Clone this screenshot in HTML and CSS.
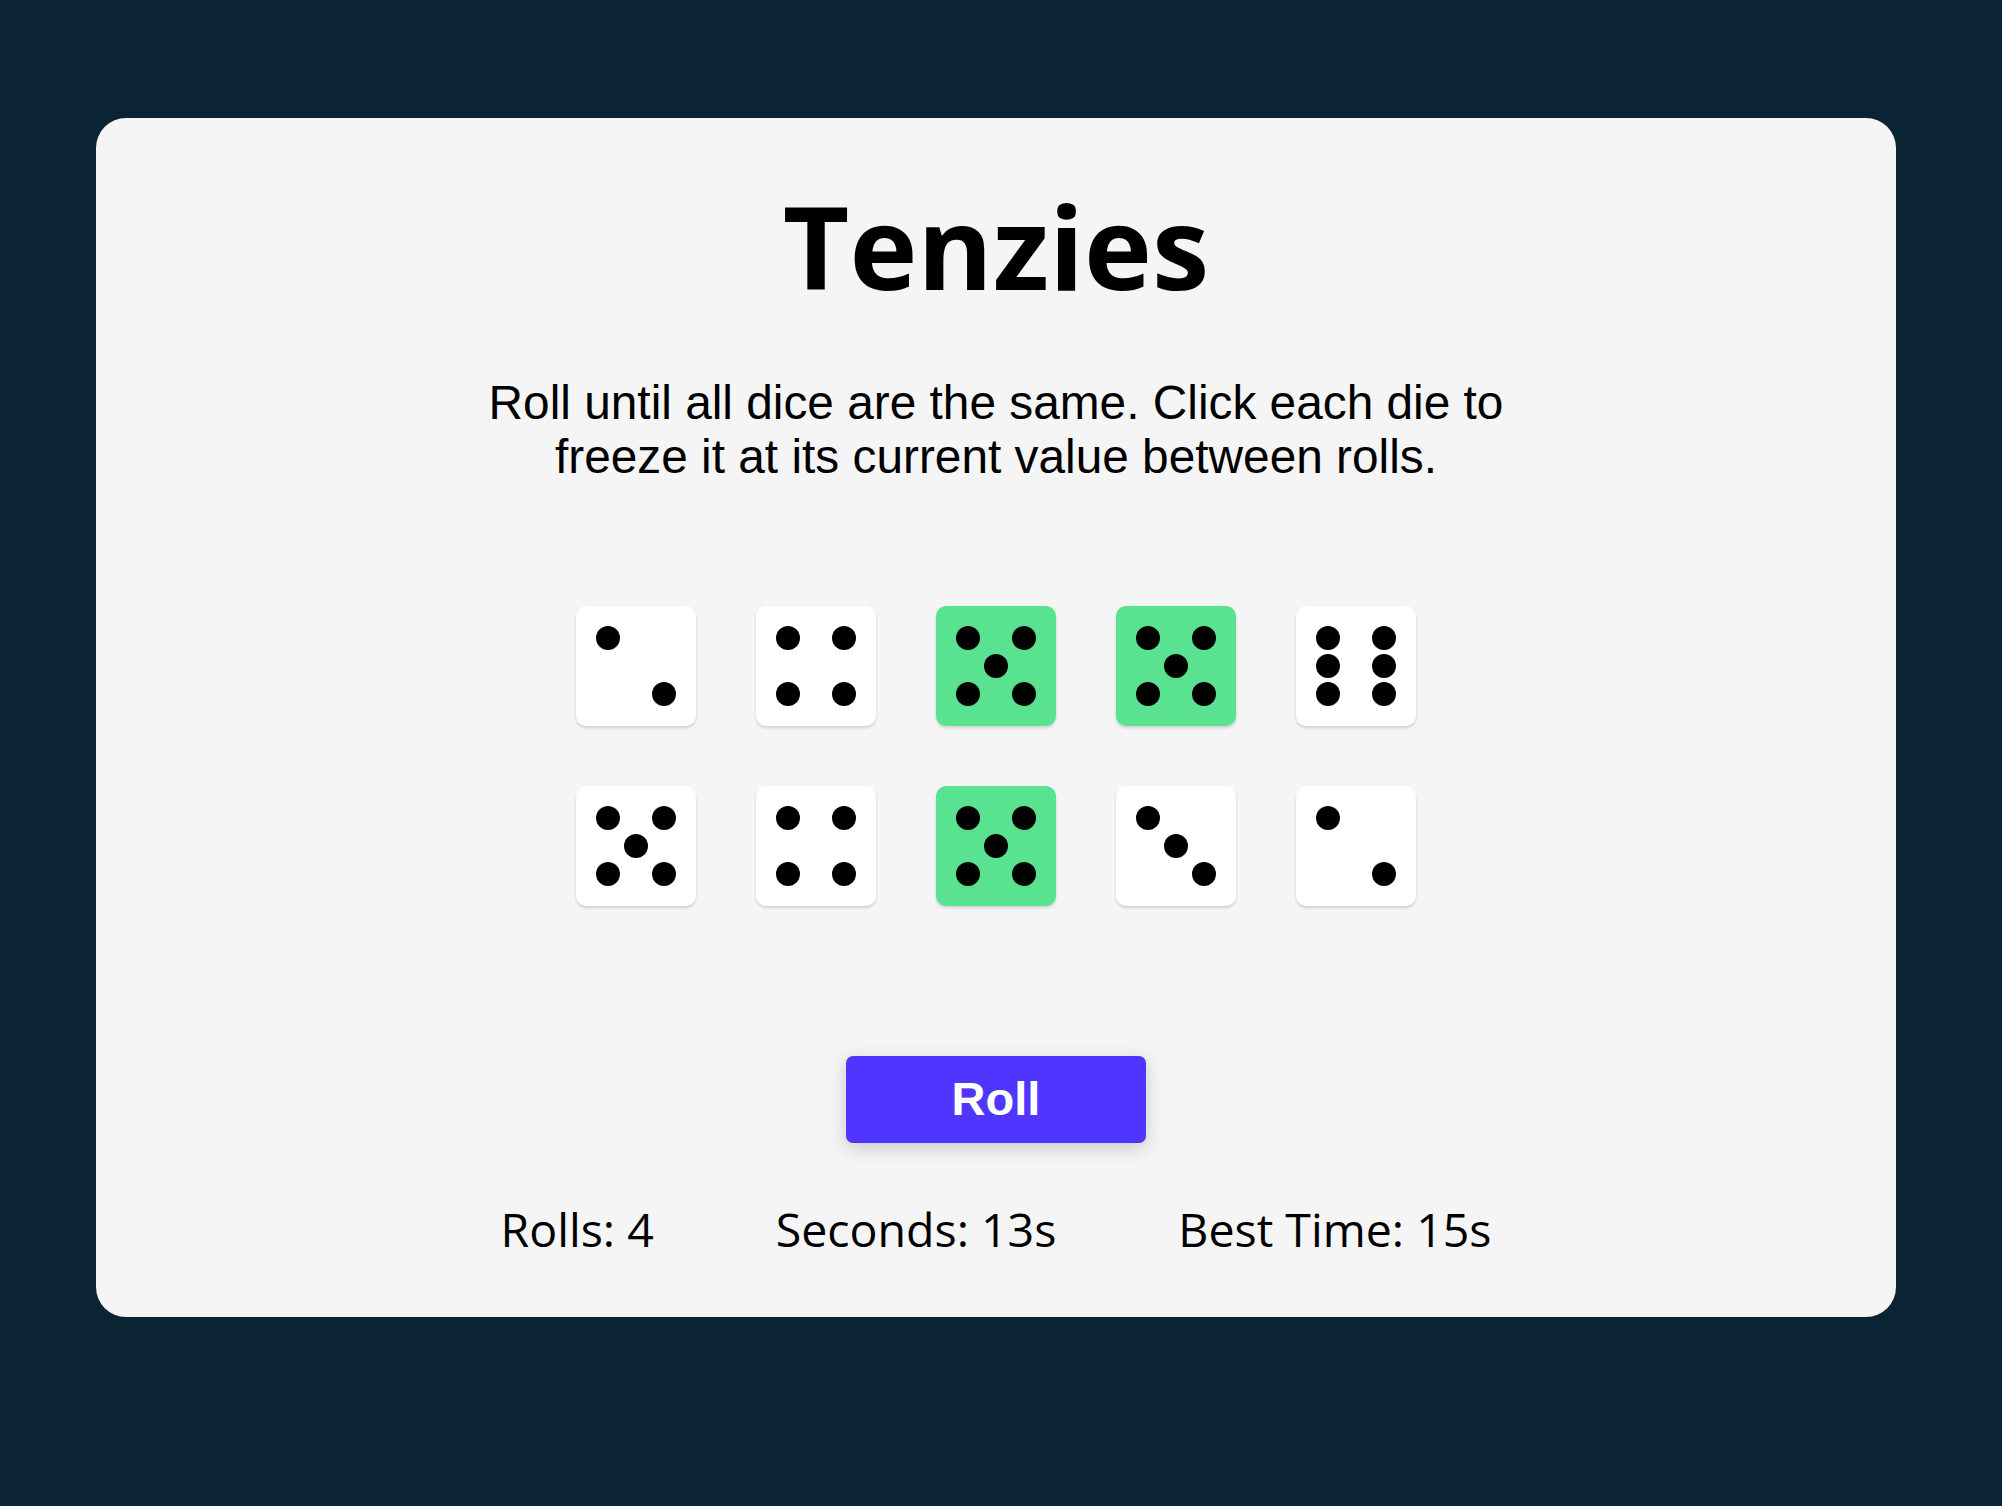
FILE: index.html
```html
<!DOCTYPE html>
<html lang="en">
<head>
<meta charset="utf-8">
<title>Tenzies</title>
<link rel="stylesheet" href="styles.css">
</head>
<body>
<main class="card">
  <h1 class="title">Tenzies</h1>
  <p class="instructions">Roll until all dice are the same. Click each die to freeze it at its current value between rolls.</p>
  <div class="dice">
    <div class="die"><span class="pip tl"></span><span class="pip br"></span></div>
    <div class="die"><span class="pip tl"></span><span class="pip tr"></span><span class="pip bl"></span><span class="pip br"></span></div>
    <div class="die held"><span class="pip tl"></span><span class="pip tr"></span><span class="pip c"></span><span class="pip bl"></span><span class="pip br"></span></div>
    <div class="die held"><span class="pip tl"></span><span class="pip tr"></span><span class="pip c"></span><span class="pip bl"></span><span class="pip br"></span></div>
    <div class="die"><span class="pip tl"></span><span class="pip tr"></span><span class="pip ml"></span><span class="pip mr"></span><span class="pip bl"></span><span class="pip br"></span></div>
    <div class="die"><span class="pip tl"></span><span class="pip tr"></span><span class="pip c"></span><span class="pip bl"></span><span class="pip br"></span></div>
    <div class="die"><span class="pip tl"></span><span class="pip tr"></span><span class="pip bl"></span><span class="pip br"></span></div>
    <div class="die held"><span class="pip tl"></span><span class="pip tr"></span><span class="pip c"></span><span class="pip bl"></span><span class="pip br"></span></div>
    <div class="die"><span class="pip tl"></span><span class="pip c"></span><span class="pip br"></span></div>
    <div class="die"><span class="pip tl"></span><span class="pip br"></span></div>
  </div>
  <button class="roll">Roll</button>
  <div class="stats">
    <span>Rolls: 4</span>
    <span>Seconds: 13s</span>
    <span>Best Time: 15s</span>
  </div>
</main>
</body>
</html>
```

FILE: styles.css
```css
* { box-sizing: border-box; }

html, body {
  margin: 0;
  padding: 0;
  background: #0b2434;
}

body {
  padding: 118px 0 0 96px;
  min-height: 1506px;
}

.card {
  width: 1800px;
  height: 1199px;
  background: #f5f5f5;
  border-radius: 30px;
  display: flex;
  flex-direction: column;
  align-items: center;
  padding: 70px 0 65px;
  color: #000;
}

.title {
  margin: 0;
  font-family: "Open Sans", "Noto Sans", sans-serif;
  font-weight: 700;
  font-size: 115px;
  line-height: 116px;
  letter-spacing: 0;
}

.instructions {
  margin: 72px 0 0;
  max-width: 1080px;
  font-family: "Liberation Sans", Arial, sans-serif;
  font-size: 47.8px;
  line-height: 54px;
  text-align: center;
}

.dice {
  margin-top: 122px;
  display: grid;
  grid-template-columns: repeat(5, 120px);
  grid-auto-rows: 120px;
  gap: 60px;
}

.die {
  background: #fff;
  border-radius: 10px;
  box-shadow: 0 2px 3px rgba(0, 0, 0, 0.15);
  display: grid;
  grid-template-columns: repeat(3, 24px);
  grid-template-rows: repeat(3, 24px);
  gap: 4px;
  padding: 20px;
}

.die.held { background: #59e391; }

.pip {
  width: 24px;
  height: 24px;
  border-radius: 50%;
  background: #000;
}

.pip.tl { grid-area: 1 / 1; }
.pip.tr { grid-area: 1 / 3; }
.pip.ml { grid-area: 2 / 1; }
.pip.c  { grid-area: 2 / 2; }
.pip.mr { grid-area: 2 / 3; }
.pip.bl { grid-area: 3 / 1; }
.pip.br { grid-area: 3 / 3; }

.roll {
  margin-top: 150px;
  width: 300px;
  height: 87px;
  border: none;
  border-radius: 7px;
  background: #5035ff;
  color: #fff;
  font-family: "Liberation Sans", Arial, sans-serif;
  font-weight: 700;
  font-size: 47px;
  line-height: 1;
  padding: 0 0 2px;
  box-shadow: 0 5px 18px rgba(0, 0, 0, 0.18);
  cursor: pointer;
}

.stats {
  margin-top: 63px;
  display: flex;
  gap: 122px;
  font-family: "Open Sans", "Noto Sans", sans-serif;
  font-size: 46.5px;
  line-height: 46px;
}
```
